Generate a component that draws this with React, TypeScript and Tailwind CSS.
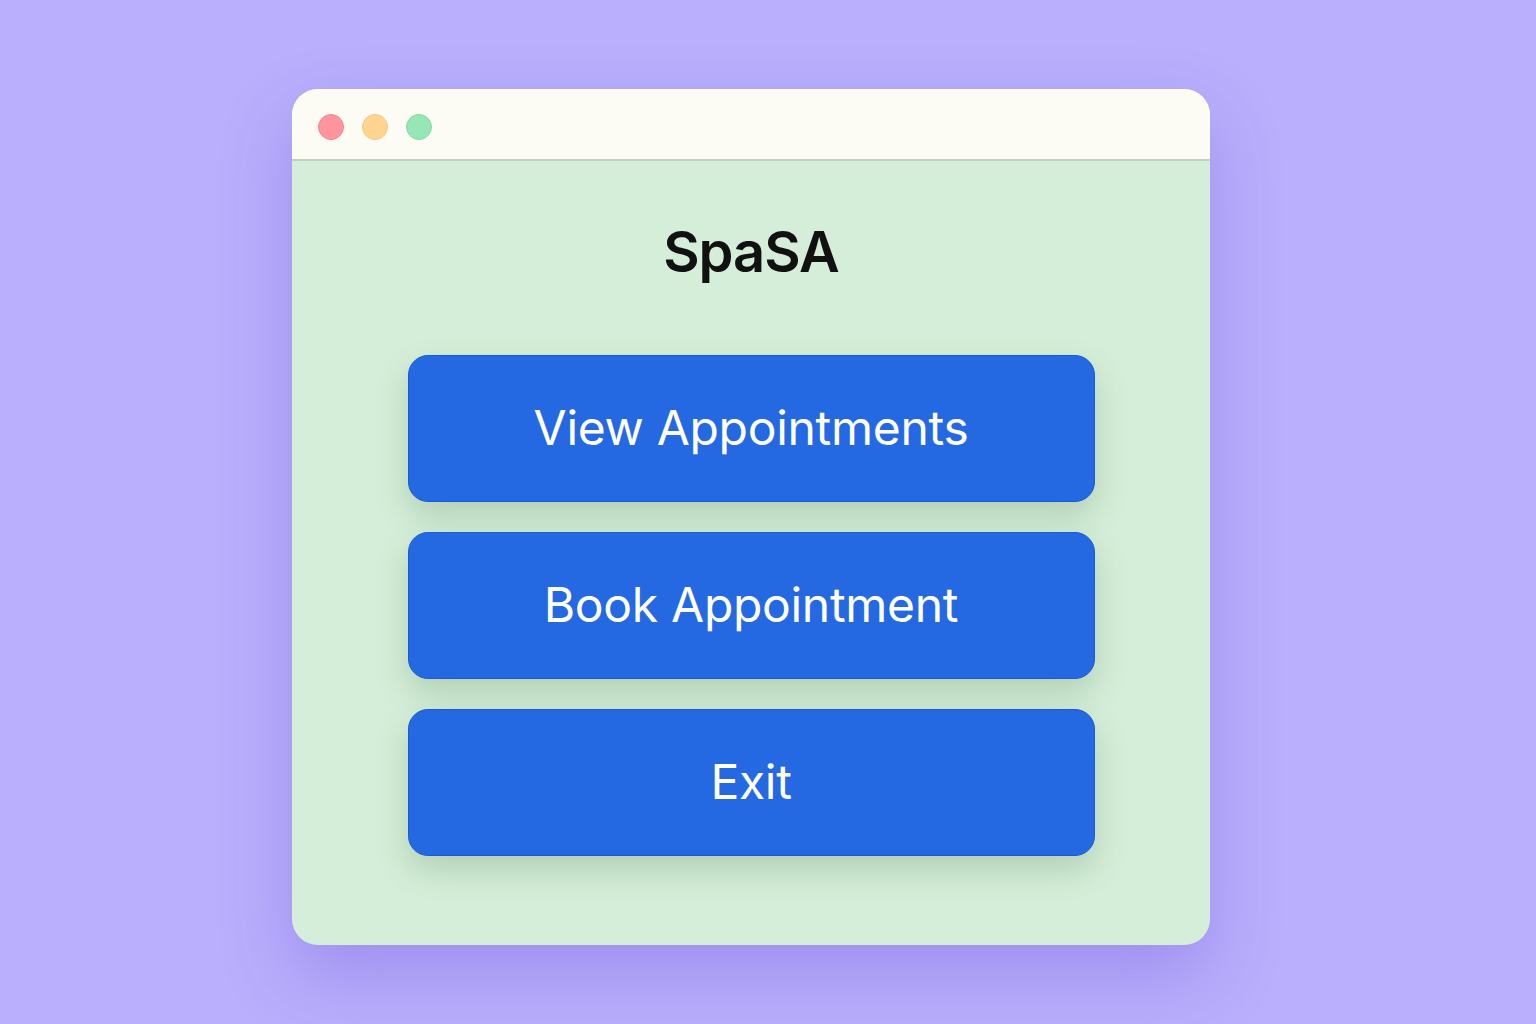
const ACTIONS = ['View Appointments', 'Book Appointment', 'Exit'];

const TrafficLights = () => (
  <div className="flex items-center gap-[18px]">
    <span className="w-[26px] h-[26px] rounded-full bg-[#FF959C] border border-[#F0848C]" />
    <span className="w-[26px] h-[26px] rounded-full bg-[#FFD491] border border-[#F5C57F]" />
    <span className="w-[26px] h-[26px] rounded-full bg-[#97E6B5] border border-[#86D8A4]" />
  </div>
);

export default function App() {
  return (
    <div
      className="min-h-screen w-full bg-[#B9AFFC] pt-[89px] pl-[292px]"
      style={{ fontFamily: "Inter, 'Noto Sans', sans-serif" }}
    >
      <div className="w-[918px] h-[856px] rounded-[26px] overflow-hidden bg-[#D5EED9] flex flex-col shadow-[0_30px_70px_rgba(90,60,210,0.28)]">
        <div className="h-[72px] shrink-0 bg-[#FDFCF4] border-b-2 border-[#C3CFC0] flex items-center px-[26px] pt-[6px]">
          <TrafficLights />
        </div>

        <div className="flex flex-col items-center pt-[61px]">
          <h1 className="text-[56px] leading-[1.1] font-semibold text-[#111111] tracking-[-1px]">
            SpaSA
          </h1>

          <div className="mt-[71px] flex flex-col gap-[30px]">
            {ACTIONS.map((label) => (
              <button
                key={label}
                type="button"
                className="w-[687px] h-[147px] rounded-[20px] bg-[#2469E2] border border-[#1C5BD6] text-white text-[48px] font-normal tracking-[-0.3px] shadow-[0_14px_32px_rgba(40,90,40,0.2)]"
              >
                {label}
              </button>
            ))}
          </div>
        </div>
      </div>
    </div>
  );
}
